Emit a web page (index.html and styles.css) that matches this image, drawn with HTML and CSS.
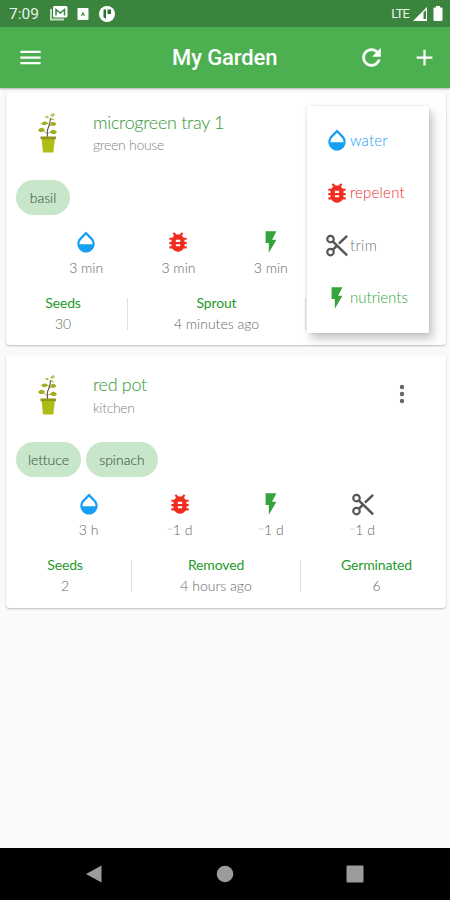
FILE: index.html
```html
<!DOCTYPE html>
<html lang="en">
<head>
<meta charset="utf-8">
<title>My Garden</title>
<link rel="stylesheet" href="styles.css">
</head>
<body>
<svg class="defs" aria-hidden="true">
  <symbol id="water" viewBox="0 0 24 24"><path d="M17.66 8L12 2.35 6.34 8C4.78 9.56 4 11.64 4 13.64s.78 4.11 2.34 5.67 3.61 2.35 5.66 2.35 4.1-.79 5.66-2.35S20 15.64 20 13.64 19.22 9.56 17.66 8zM6 14c.01-2 .62-3.27 1.76-4.4L12 5.27l4.24 4.38C17.38 10.77 17.99 12 18 14H6z"/></symbol>
  <symbol id="bug" viewBox="0 0 24 24"><path d="M20 8h-2.81c-.45-.78-1.07-1.45-1.82-1.96L17 4.41 15.59 3l-2.17 2.17C12.96 5.06 12.49 5 12 5s-.96.06-1.41.17L8.41 3 7 4.41l1.62 1.63C7.88 6.55 7.26 7.22 6.81 8H4v2h2.09c-.05.33-.09.66-.09 1v1H4v2h2v1c0 .34.04.67.09 1H4v2h2.81c1.04 1.79 2.97 3 5.19 3s4.15-1.21 5.19-3H20v-2h-2.09c.05-.33.09-.66.09-1v-1h2v-2h-2v-1c0-.34-.04-.67-.09-1H20V8zm-6 8h-4v-2h4v2zm0-4h-4v-2h4v2z"/></symbol>
  <symbol id="bolt" viewBox="0 0 24 24"><path d="M7 2v11h3v9l7-12h-4l4-8z"/></symbol>
  <symbol id="cut" viewBox="0 0 24 24"><g fill="none" stroke="currentColor" stroke-width="2"><circle cx="6" cy="6.500" r="3"/><circle cx="6" cy="18.500" r="3"/><path d="M8.100 8.600L21.300 21.500M8.100 16.400l3.400-3.400M13.800 10.700L21.300 3.500" stroke-width="2.300"/></g></symbol>
  <symbol id="plant" viewBox="0 0 20 40">
    <path d="M9.400 24V17l2.300-6 .8-6" fill="none" stroke="#5e5348" stroke-width="1.100"/>
    <path d="M9.500 21l-4-3M9.700 20l5-1M10.700 13l4-1.500M11 11L7 9" fill="none" stroke="#6d6a35" stroke-width=".6"/>
    <g fill="#a2ae20"><path d="M0 17q4-4.500 7 0-4 4.500-7 0zM12 19q3-5 7 0-3 4.500-7 0zM3 10.500q4-4 7 0-4 3.500-7 0zM12 11q3-4.500 6.500 0-3 4-6.500 0z"/><path d="M7 3.500q3-2 4 1-3 2-4-1zM12 3q2-4 5-2-1 4-5 2zM12 6q3-2 4.500 1-3 1-4.500-1z" opacity=".75"/></g>
    <path d="M3.500 25h13.500l-1.700 14.500H5z" fill="#adbd16"/><path d="M2.500 23.500h15.500v2.700H2.500z" fill="#98931a"/>
  </symbol>
</svg>
<div class="phone">
  <div class="status">
    <span class="clock">7:09</span>
    <svg class="notif" viewBox="0 0 18 18"><path d="M1 5v10.500h13" fill="none" stroke="#c5dec6" stroke-width="2"/><rect x="3" y="2" width="14.500" height="11.500" rx="1.500" fill="#fff"/><path d="M6 11.500V5.500l4.300 3.500 4.200-3.500v6" fill="none" stroke="#388442" stroke-width="1.500"/></svg>
    <svg class="square" viewBox="0 0 12 14"><rect x=".5" y="1" width="11" height="12" rx="1" fill="#fff"/><path d="M3.500 9.500L6 4.500l2.500 5L6 8z" fill="#4f8f55"/></svg>
    <svg class="round" viewBox="0 0 16 16"><circle cx="8" cy="8" r="8" fill="#fff"/><path d="M4.500 3.500H7v9.500L4.500 11zM8.500 3.500H12V8H8.500z" fill="#286d32"/></svg>
    <span class="lte">LTE</span>
    <svg class="signal" viewBox="0 0 14 14"><path d="M0 14L14 0v14z" fill="#fff"/><path d="M10.500 5.500L13 3v9h-2.500z" fill="#388442"/></svg>
    <svg class="battery" viewBox="0 0 9 15"><path d="M2.500 0h4v1.500H8q1 0 1 1V14q0 1-1 1H1q-1 0-1-1V2.500q0-1 1-1h1.500z" fill="#fff"/></svg>
  </div>
  <header class="appbar">
    <svg class="act" viewBox="0 0 24 24"><path d="M3 18h18v-2H3v2zm0-5h18v-2H3v2zm0-7v2h18V6H3z"/></svg>
    <h1>My Garden</h1>
    <svg class="act refresh" viewBox="0 0 24 24"><path d="M17.65 6.35C16.2 4.9 14.21 4 12 4c-4.42 0-7.99 3.58-7.99 8s3.57 8 7.99 8c3.73 0 6.84-2.55 7.73-6h-2.08c-.82 2.33-3.04 4-5.65 4-3.31 0-6-2.69-6-6s2.69-6 6-6c1.66 0 3.14.69 4.22 1.78L13 11h7V4l-2.35 2.35z"/></svg>
    <svg class="act" viewBox="0 0 24 24"><path d="M19 13h-6v6h-2v-6H5v-2h6V5h2v6h6v2z"/></svg>
  </header>
  <main>
    <section class="card first">
      <div class="head"><svg class="plant"><use href="#plant"/></svg><div class="names"><h2>microgreen tray 1</h2><p class="place">green house</p></div></div>
      <div class="chips"><span class="chip basil">basil</span></div>
      <div class="care">
        <div><svg class="ic blue"><use href="#water"/></svg><span>3 min</span></div>
        <div><svg class="ic red"><use href="#bug"/></svg><span>3 min</span></div>
        <div><svg class="ic green"><use href="#bolt"/></svg><span>3 min</span></div>
      </div>
      <div class="stats">
        <div><b>Seeds</b><span>30</span></div>
        <div><b>Sprout</b><span>4 minutes ago</span></div>
        <div></div>
      </div>
      <div class="menu">
        <div class="blue"><svg class="ic"><use href="#water"/></svg><span class="wide">water</span></div>
        <div class="red"><svg class="ic"><use href="#bug"/></svg><span class="wide">repelent</span></div>
        <div class="gray"><svg class="ic"><use href="#cut"/></svg><span>trim</span></div>
        <div class="green"><svg class="ic"><use href="#bolt"/></svg><span>nutrients</span></div>
      </div>
    </section>
    <section class="card second">
      <div class="head"><svg class="plant"><use href="#plant"/></svg><div class="names"><h2>red pot</h2><p class="place">kitchen</p></div><svg class="more" viewBox="0 0 6 20"><circle cx="3" cy="3" r="2.200"/><circle cx="3" cy="10" r="2.200"/><circle cx="3" cy="17" r="2.200"/></svg></div>
      <div class="chips"><span class="chip lettuce">lettuce</span><span class="chip spinach">spinach</span></div>
      <div class="care">
        <div><svg class="ic blue"><use href="#water"/></svg><span>3 h</span></div>
        <div><svg class="ic red"><use href="#bug"/></svg><span><i>~</i>1 d</span></div>
        <div><svg class="ic green"><use href="#bolt"/></svg><span><i>~</i>1 d</span></div>
        <div><svg class="ic gray"><use href="#cut"/></svg><span><i>~</i>1 d</span></div>
      </div>
      <div class="stats">
        <div><b>Seeds</b><span>2</span></div>
        <div><b>Removed</b><span>4 hours ago</span></div>
        <div><b>Germinated</b><span>6</span></div>
      </div>
    </section>
  </main>
  <nav>
    <svg viewBox="0 0 18 18"><path d="M1 9L16.500 .5v17z"/></svg>
    <svg viewBox="0 0 18 18"><circle cx="9" cy="9" r="8.300"/></svg>
    <svg viewBox="0 0 18 18"><rect x=".5" y=".5" width="17" height="17" rx="1"/></svg>
  </nav>
</div>
</body>
</html>
```
FILE: styles.css
```css
* { box-sizing: border-box; margin: 0; padding: 0; }
body { background: #fafafa; font-family: Lato, "Open Sans", sans-serif; }
svg { display: block; flex: none; fill: currentColor; }
.defs { position: absolute; width: 0; height: 0; }
.phone { width: 450px; height: 900px; display: flex; flex-direction: column; overflow: hidden; }

.status { height: 27px; flex: none; background: #3a843e; color: #e8f3e8; display: flex; align-items: center; padding: 0 7px 0 9px; font-family: Roboto, sans-serif; }
.clock { font-size: 15.500px; width: 41px; margin-top: 1px; }
.notif { width: 18px; height: 18px; margin-right: 9px; margin-top: -1px; }
.square { width: 12px; height: 14px; margin-right: 10px; }
.round { width: 16px; height: 16px; }
.lte { font-size: 13px; letter-spacing: -.9px; margin-left: auto; margin-right: 4px; }
.signal { width: 14px; height: 14px; margin-right: 6px; }
.battery { width: 10px; height: 15px; }

.appbar { height: 61px; flex: none; background: #4caf50; color: #fff; display: flex; align-items: center; padding: 0 12px 0 17px; box-shadow: 0 1px 2px rgba(0,0,0,.3); z-index: 1; }
.appbar h1 { flex: 1; font: 500 22px Roboto, sans-serif; letter-spacing: -.1px; padding-left: 128px; white-space: nowrap; }
.act { width: 27px; height: 27px; }
.refresh { margin-right: 26px; stroke: #fff; stroke-width: .5; }

main { flex: 1; padding: 5px 4px 0 6px; display: flex; flex-direction: column; gap: 10px; }
.card { position: relative; height: 252px; background: #fff; border-radius: 4px; box-shadow: 0 1px 2px rgba(0,0,0,.25); display: flex; flex-direction: column; }
.second { height: 253px; }
.head { height: 87px; display: flex; padding: 20px 41px 0 32px; }
.plant { width: 20px; height: 40px; margin-right: 35px; }
.names { flex: 1; }
h2 { font-weight: 300; font-size: 18px; line-height: 22px; margin-top: -2px; color: #43a047; letter-spacing: -.3px; -webkit-text-stroke: .1px; }
.place { font-size: 14px; line-height: 22px; margin-top: 1px; color: #858585; font-weight: 300; letter-spacing: -.3px; }
.second .place { margin-top: 2px; }
.more { width: 6px; height: 20px; margin-top: 9px; color: #666; }
.chips { display: flex; gap: 5px; padding-left: 10px; height: 35px; }
.chip { height: 35px; border-radius: 18px; background: #c8e6c9; color: #4e6150; font-size: 14px; font-weight: 300; -webkit-text-stroke: .15px; display: flex; align-items: center; justify-content: center; padding-bottom: 1px; }
.basil { width: 54px; }
.lettuce { width: 65px; }
.spinach { width: 72px; }
.care { display: grid; grid-template-columns: repeat(4, 92.300px); padding-left: 34px; margin-top: 14px; height: 66px; }
.second .care { grid-template-columns: repeat(4, 91.300px); padding-left: 37px; }
.care div { display: flex; flex-direction: column; align-items: center; }
.ic { width: 26px; height: 26px; }
.care span { font-size: 14px; line-height: 20px; margin-top: 3px; color: #666; font-weight: 300; white-space: nowrap; }
i { font-style: normal; font-size: 9px; line-height: 1; vertical-align: 3px; opacity: .6; }
.blue { color: #16a0f3; }
.red { color: #ef2c1e; }
.green { color: #35a53b; }
.gray { color: #555; }
.stats { display: grid; grid-template-columns: 122px 178px 140px; padding-top: 3px; }
.second .stats { grid-template-columns: 126px 169px 145px; }
.stats > div { height: 32px; display: flex; flex-direction: column; align-items: center; border-right: 1px solid #e0e0e0; }
.stats > div:first-child { padding-right: 7px; }
.stats > div:last-child { border: 0; padding-left: 6px; }
.stats b { font-size: 14px; line-height: 20px; margin-top: -5px; color: #259a2b; font-weight: 400; letter-spacing: -.15px; }
.stats span { font-size: 14px; line-height: 20px; margin-top: 1px; color: #666; font-weight: 300; white-space: nowrap; }
.menu { position: absolute; left: 301px; top: 13px; width: 122px; height: 227px; background: #fff; border-radius: 1px; box-shadow: 4px 6px 10px rgba(0,0,0,.22), 0 0 3px rgba(0,0,0,.12); padding: 8px 0 9px 17px; }
.menu > div { height: 52.500px; display: flex; align-items: center; }
.menu span { font-size: 15px; font-weight: 300; margin-top: -1px; }
.menu .wide { letter-spacing: .2px; }
.menu .gray span { color: #777; letter-spacing: .3px; }

nav { height: 52px; flex: none; background: #000; color: #9c9c9c; display: flex; justify-content: space-between; padding: 17px 86px 0 85px; }
nav svg { width: 18px; height: 18px; }
```
